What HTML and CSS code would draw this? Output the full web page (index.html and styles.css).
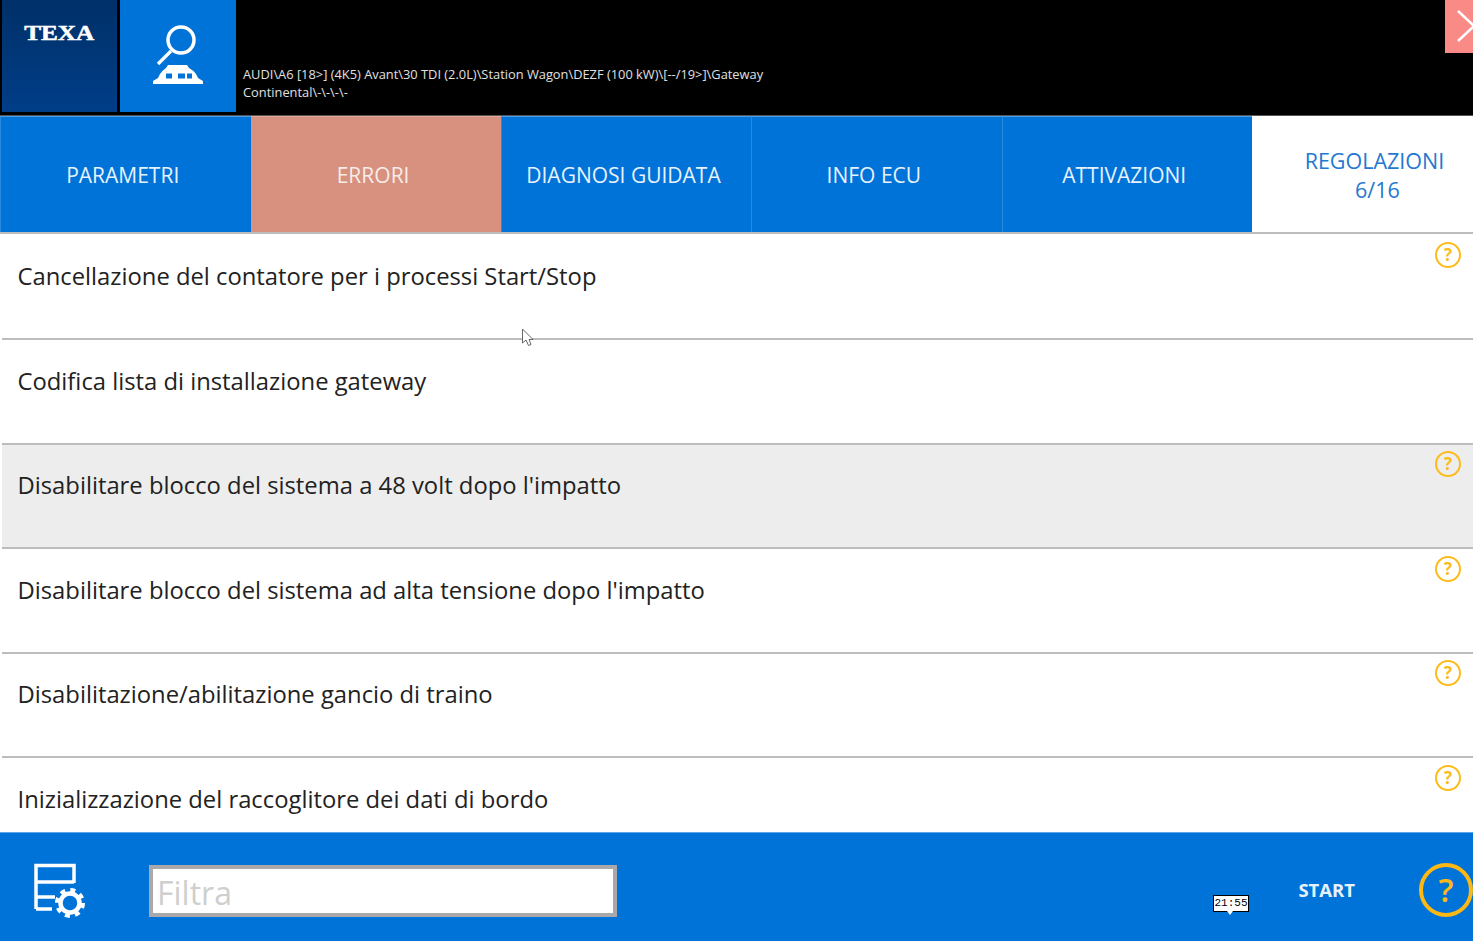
FILE: index.html
```html
<!DOCTYPE html>
<html lang="it">
<head>
<meta charset="utf-8">
<title>TEXA</title>
<link rel="stylesheet" href="styles.css">
</head>
<body>
<div class="app">
  <header class="header">
    <div class="tile tile-logo"><span class="logo">TEXA</span></div>
    <div class="tile tile-search">
      <svg class="search-icon" viewBox="0 0 56 62" width="56" height="62">
        <circle cx="31" cy="16" r="13" fill="none" stroke="#fff" stroke-width="3.5"/>
        <path d="M21 27 L8 40" stroke="#fff" stroke-width="3.2" fill="none"/>
        <path fill="#fff" fill-rule="evenodd" d="M18 41 H37 L39 44 Q43 46 46 50 L48 54 L53 57 V60 H3 V57 L8 54 L10 50 Q13 46 16 44 Z M16 49.5 V54.5 H22 V49.5 Z M28 49.5 V54.5 H35 V49.5 Z M37 49.5 V54.5 H42 V49.5 Z"/>
      </svg>
    </div>
    <div class="breadcrumb">AUDI\A6 [18&gt;] (4K5) Avant\30 TDI (2.0L)\Station Wagon\DEZF (100 kW)\[--/19&gt;]\Gateway Continental\-\-\-\-</div>
    <div class="close">
      <svg viewBox="0 0 28 53" width="28" height="53"><path d="M13 11 L29 26 L13 41" fill="none" stroke="#fff" stroke-width="2.5"/></svg>
    </div>
  </header>

  <nav class="tabs">
    <div class="tab">PARAMETRI</div>
    <div class="tab tab-error">ERRORI</div>
    <div class="tab">DIAGNOSI GUIDATA</div>
    <div class="tab">INFO ECU</div>
    <div class="tab">ATTIVAZIONI</div>
    <div class="tab tab-active"><span>REGOLAZIONI<br><span class="tab-count">6/16</span></span></div>
  </nav>

  <main class="list">
    <div class="row"><span class="row-text">Cancellazione del contatore per i processi Start/Stop</span><span class="help">?</span></div>
    <div class="row"><span class="row-text">Codifica lista di installazione gateway</span></div>
    <div class="row row-selected"><span class="row-text">Disabilitare blocco del sistema a 48 volt dopo l'impatto</span><span class="help">?</span></div>
    <div class="row"><span class="row-text">Disabilitare blocco del sistema ad alta tensione dopo l'impatto</span><span class="help">?</span></div>
    <div class="row"><span class="row-text">Disabilitazione/abilitazione gancio di traino</span><span class="help">?</span></div>
    <div class="row"><span class="row-text">Inizializzazione del raccoglitore dei dati di bordo</span><span class="help">?</span></div>
    <svg class="cursor" viewBox="0 0 14 20" width="14" height="20"><path d="M1.5 1 V15 L5 12 L7.5 17.5 L10 16.5 L8 11.5 H12 Z" fill="#fff" stroke="#666" stroke-width="1"/></svg>
  </main>

  <footer class="footer">
    <svg class="settings-icon" viewBox="0 0 54 56" width="54" height="56">
      <path d="M3 47 V3.5 H41 V21 M3 20 H41 M3 35 H22 M3 47 H19" fill="none" stroke="#fff" stroke-width="3.5"/>
      <circle cx="37" cy="41" r="9.5" fill="#0073d9" stroke="#fff" stroke-width="4.5"/>
      <circle cx="37" cy="41" r="13" fill="none" stroke="#fff" stroke-width="4" stroke-dasharray="5 5.2"/>
    </svg>
    <div class="filter">Filtra</div>
    <div class="start">START</div>
    <div class="help-big">?</div>
    <div class="clock">21:55</div>
  </footer>
</div>
</body>
</html>
```
FILE: styles.css
```css
* { box-sizing: border-box; }
html, body { margin: 0; padding: 0; height: 100%; overflow: hidden; background: #fff; }
body { font-family: "Open Sans", "Noto Sans", sans-serif; }

.app { display: flex; flex-direction: column; height: 941px; width: 1473px; overflow: hidden; }

.header { display: flex; height: 116px; flex: none; background: #000; padding-left: 2px; align-items: flex-start; position: relative; border-bottom: 1px solid #555; }
.tile { height: 112px; flex: none; display: flex; justify-content: center; }
.tile-logo { width: 115px; background: linear-gradient(#003068, #003e88); margin-right: 3px; }
.tile-search { width: 116px; background: #0073d9; }
.logo { font-family: "Liberation Serif", serif; font-weight: 700; font-size: 21px; color: #fff; -webkit-text-stroke: 0.5px #fff; margin-top: 20px; line-height: 26px; height: 26px; transform: scaleX(1.2); }
.search-icon { margin-top: 24px; }
.breadcrumb { width: 540px; margin: 65px 0 0 7px; font-size: 12.85px; line-height: 18px; color: #e0e0e0; }
.close { position: absolute; top: 0; right: 0; width: 28px; height: 53px; background: #f98a85; }
.close svg { display: block; }

.tabs { display: flex; height: 118px; flex: none; border-bottom: 2px solid #bdbdbd; }
.tab { width: 250.4px; flex: none; display: flex; align-items: center; justify-content: center; background: #0073d9; color: #e6f2fc; font-size: 21px; line-height: 29px; padding: 2px 6px 0 0; text-align: center; border-top: 1px solid #4a9fe6; border-left: 1px solid #2a88dd; }
.tab-error { background: #d7917e; color: #f6ece8; border-top-color: #e0a898; border-left-color: #0073d9; }
.tab-active { flex: 1; background: #fff; color: #2478d0; border: 0; padding: 1px 0 0 24px; font-size: 21.5px; }
.tab-count { padding-left: 6px; }

.list { flex: 1; min-height: 0; overflow: hidden; position: relative; padding-top: 1.5px; }
.row { height: 104.6px; display: flex; justify-content: space-between; align-items: flex-start; margin-left: 2px; padding: 23.5px 12px 0 15.5px; border-bottom: 2px solid #bdbdbd; background: #fff; }
.row-selected { background: #ededed; }
.row-text { font-size: 23.8px; line-height: 34px; color: #222; }
.help { flex: none; margin-top: -17px; width: 26px; height: 26px; border: 2px solid #fbbc1a; border-radius: 50%; color: #fbbc1a; font-size: 17px; line-height: 22px; text-align: center; font-weight: 700; }
.cursor { position: absolute; top: 94px; left: 521px; }

.footer { height: 109px; flex: none; background: #0073d9; border-top: 1px solid #5aa8ea; display: flex; align-items: center; position: relative; padding: 6px 0 0 33px; }
.settings-icon { flex: none; }
.filter { width: 468px; height: 52px; margin: 1px 0 0 62px; border: 4px solid #a9a9a9; background: #fff; color: #cfcfcf; font-size: 32px; line-height: 48px; padding-left: 4px; }
.start { margin: -1px 64px 0 auto; color: #e6f2fc; font-size: 18.5px; font-weight: 700; }
.help-big { flex: none; width: 54px; height: 54px; border: 4px solid #fdb813; border-radius: 50%; color: #fdb813; font-size: 33px; line-height: 46px; text-align: center; font-weight: 600; }
.clock { position: absolute; left: 1213px; top: 62px; width: 36px; height: 17px; background: #fff; border: 1px solid #000; font-family: "Liberation Mono", monospace; font-size: 11px; line-height: 15px; text-align: center; color: #000; }
.clock::after { content: ""; position: absolute; left: 13px; top: 15px; border: 3px solid transparent; border-top: 4px solid #fff; }
```
